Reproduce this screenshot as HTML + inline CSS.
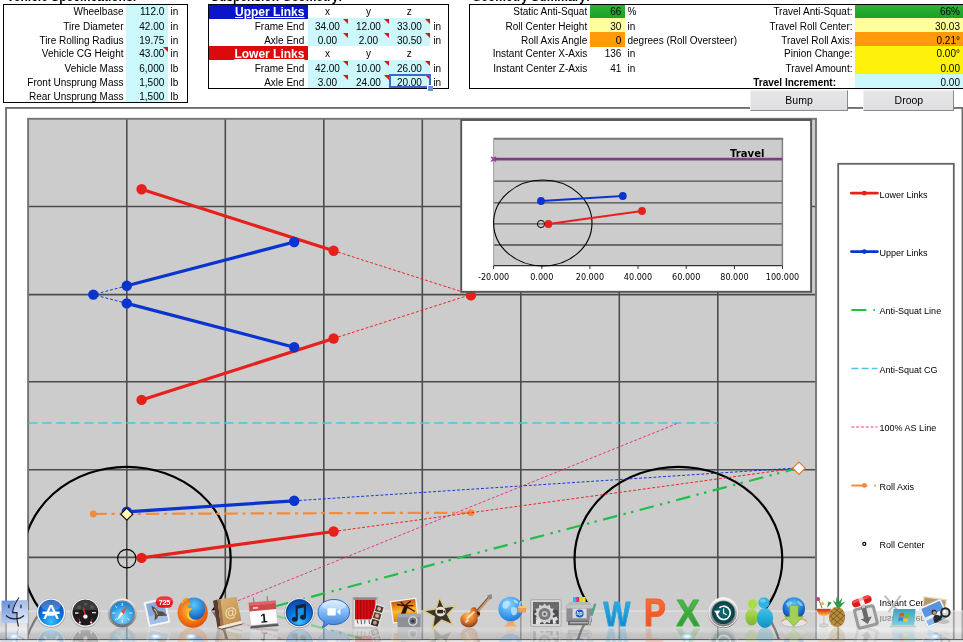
<!DOCTYPE html>
<html><head><meta charset="utf-8"><title>Suspension Calculator</title>
<style>
html,body{margin:0;padding:0;background:#fff;}
body{width:963px;height:642px;overflow:hidden;position:relative;font-family:"Liberation Sans",Arial,sans-serif;font-size:10px;color:#000;}
.t{position:absolute;white-space:nowrap;line-height:12px;height:12px;}
.r{text-align:right;}
.c{text-align:center;}
.b{font-weight:bold;}
.box{position:absolute;box-sizing:border-box;}
.tri{position:absolute;width:0;height:0;border-top:5px solid #d8141c;border-left:5px solid transparent;}
svg{position:absolute;left:0;top:0;}
svg text{font-family:"Liberation Sans",Arial,sans-serif;}
.dv text{font-family:"DejaVu Sans","Liberation Sans",sans-serif;}
</style></head><body>
<svg width="963" height="642" viewBox="0 0 963 642">
<defs><clipPath id="plot"><rect x="28.3" y="118.7" width="788" height="530"/></clipPath><clipPath id="shelfclip"><rect x="0" y="611" width="963" height="29"/></clipPath></defs>
<g id="cg">
<rect x="6.05" y="107.95" width="956.4" height="560" fill="#fff" stroke="#6a6a6a" stroke-width="1.8"/>
<rect x="28.3" y="118.7" width="788" height="530" fill="#cccccc"/>
<line x1="126.8" y1="118" x2="126.8" y2="642" stroke="#4c4c4c" stroke-width="1.6"/>
<line x1="225.3" y1="118" x2="225.3" y2="642" stroke="#4c4c4c" stroke-width="1.6"/>
<line x1="323.8" y1="118" x2="323.8" y2="642" stroke="#4c4c4c" stroke-width="1.6"/>
<line x1="422.3" y1="118" x2="422.3" y2="642" stroke="#4c4c4c" stroke-width="1.6"/>
<line x1="520.8" y1="118" x2="520.8" y2="642" stroke="#4c4c4c" stroke-width="1.6"/>
<line x1="619.3" y1="118" x2="619.3" y2="642" stroke="#4c4c4c" stroke-width="1.6"/>
<line x1="717.8" y1="118" x2="717.8" y2="642" stroke="#4c4c4c" stroke-width="1.6"/>
<line x1="27.6" y1="206.5" x2="817" y2="206.5" stroke="#4c4c4c" stroke-width="1.6"/>
<line x1="27.6" y1="294.6" x2="817" y2="294.6" stroke="#4c4c4c" stroke-width="1.6"/>
<line x1="27.6" y1="381.7" x2="817" y2="381.7" stroke="#4c4c4c" stroke-width="1.6"/>
<line x1="27.6" y1="469.7" x2="817" y2="469.7" stroke="#4c4c4c" stroke-width="1.6"/>
<line x1="27.6" y1="557.4" x2="817" y2="557.4" stroke="#4c4c4c" stroke-width="1.6"/>
<line x1="27.6" y1="645.2" x2="817" y2="645.2" stroke="#4c4c4c" stroke-width="1.6"/>
<rect x="28.1" y="118.8" width="787.9" height="540" fill="none" stroke="#747474" stroke-width="1.9"/>
<g clip-path="url(#plot)">
<line x1="333.6" y1="250.7" x2="470.9" y2="294.6" stroke="#e8201c" stroke-width="0.95" stroke-dasharray="2.9,1.9"/>
<line x1="126.8" y1="285.8" x2="93.3" y2="294.6" stroke="#0a34d0" stroke-width="0.95" stroke-dasharray="2.9,1.9"/>
<line x1="333.6" y1="338.5" x2="470.9" y2="294.6" stroke="#e8201c" stroke-width="0.95" stroke-dasharray="2.9,1.9"/>
<line x1="126.8" y1="303.4" x2="93.3" y2="294.6" stroke="#0a34d0" stroke-width="0.95" stroke-dasharray="2.9,1.9"/>
<line x1="141.6" y1="189.3" x2="333.6" y2="250.7" stroke="#e8201c" stroke-width="3.2" stroke-linecap="round"/>
<line x1="141.6" y1="399.9" x2="333.6" y2="338.5" stroke="#e8201c" stroke-width="3.2" stroke-linecap="round"/>
<line x1="126.8" y1="285.8" x2="294.2" y2="242.0" stroke="#0a34d0" stroke-width="3.2" stroke-linecap="round"/>
<line x1="126.8" y1="303.4" x2="294.2" y2="347.2" stroke="#0a34d0" stroke-width="3.2" stroke-linecap="round"/>
<circle cx="141.6" cy="189.3" r="5.2" fill="#e8201c"/>
<circle cx="333.6" cy="250.7" r="5.2" fill="#e8201c"/>
<circle cx="126.8" cy="285.8" r="5.2" fill="#0a34d0"/>
<circle cx="294.2" cy="242.0" r="5.2" fill="#0a34d0"/>
<circle cx="141.6" cy="399.9" r="5.2" fill="#e8201c"/>
<circle cx="333.6" cy="338.5" r="5.2" fill="#e8201c"/>
<circle cx="126.8" cy="303.4" r="5.2" fill="#0a34d0"/>
<circle cx="294.2" cy="347.2" r="5.2" fill="#0a34d0"/>
<circle cx="93.3" cy="294.6" r="5.2" fill="#0a34d0"/>
<circle cx="470.9" cy="295.4" r="5.2" fill="#e8201c"/>
<line x1="28.3" y1="423" x2="717.8" y2="423" stroke="#4cc4ea" stroke-width="1.6" stroke-dasharray="9.3,4.7"/>
<ellipse cx="126.8" cy="558.9" rx="103.9" ry="92.1" fill="none" stroke="#000" stroke-width="2.2"/>
<ellipse cx="678.4" cy="558.9" rx="103.9" ry="92.1" fill="none" stroke="#000" stroke-width="2.2"/>
<circle cx="126.8" cy="558.6" r="9.2" fill="none" stroke="#000" stroke-width="1.2"/>
<line x1="126.8" y1="645.6" x2="678.4" y2="423" stroke="#ee2a8a" stroke-width="0.95" stroke-dasharray="2.9,1.9"/>
<line x1="126.8" y1="645.6" x2="799.0" y2="467.8" stroke="#20be48" stroke-width="2.2" stroke-dasharray="14.5,6.5,2.4,5.4,2.4,6.56" stroke-dashoffset="-1.86"/>
<line x1="93.3" y1="514.0" x2="470.9" y2="512.7" stroke="#f58a3a" stroke-width="2.2" stroke-dasharray="13.6,4.6,3.2,4.8"/>
<circle cx="93.3" cy="514.0" r="3.4" fill="#f58a3a"/>
<circle cx="470.9" cy="512.7" r="3.4" fill="#f58a3a"/>
<line x1="294.2" y1="500.8" x2="799.0" y2="467.8" stroke="#0a34d0" stroke-width="0.95" stroke-dasharray="2.9,1.9"/>
<line x1="333.6" y1="531.5" x2="799.0" y2="467.8" stroke="#e8201c" stroke-width="0.95" stroke-dasharray="2.9,1.9"/>
<line x1="126.8" y1="511.8" x2="294.2" y2="500.8" stroke="#0a34d0" stroke-width="3.2" stroke-linecap="round"/>
<line x1="141.6" y1="557.9" x2="333.6" y2="531.5" stroke="#e8201c" stroke-width="3.2" stroke-linecap="round"/>
<circle cx="126.8" cy="511.8" r="5.2" fill="#0a34d0"/>
<circle cx="294.2" cy="500.8" r="5.2" fill="#0a34d0"/>
<circle cx="141.6" cy="557.9" r="5.2" fill="#e8201c"/>
<circle cx="333.6" cy="531.5" r="5.2" fill="#e8201c"/>
<path d="M120.8 514.2 L126.8 508.2 L132.8 514.2 L126.8 520.2 Z" fill="#ffffb4" stroke="#111" stroke-width="1.2"/>
<path d="M792.8 468.2 L799.0 462.0 L805.2 468.2 L799.0 474.4 Z" fill="#ffffff" stroke="#e07a30" stroke-width="1.2"/>
</g>
<g class="dv">
<rect x="461.2" y="120" width="349.9" height="171.8" fill="#fff" stroke="#555" stroke-width="1.9"/>
<rect x="493.6" y="138.7" width="288.8" height="126.6" fill="#cccccc"/>
<line x1="493.6" y1="138.7" x2="783.2" y2="138.7" stroke="#747474" stroke-width="1.9"/>
<line x1="493.6" y1="181.2" x2="782.4" y2="181.2" stroke="#4c4c4c" stroke-width="1.3"/>
<line x1="493.6" y1="202.8" x2="782.4" y2="202.8" stroke="#4c4c4c" stroke-width="1.3"/>
<line x1="493.6" y1="223.9" x2="782.4" y2="223.9" stroke="#4c4c4c" stroke-width="1.3"/>
<line x1="493.6" y1="245" x2="782.4" y2="245" stroke="#4c4c4c" stroke-width="1.3"/>
<line x1="493.6" y1="265.6" x2="782.4" y2="265.6" stroke="#333" stroke-width="1.1"/>
<line x1="493.6" y1="138.7" x2="493.6" y2="266" stroke="#a0a0a0" stroke-width="1"/>
<line x1="782.4" y1="138.7" x2="782.4" y2="266" stroke="#808080" stroke-width="1.5"/>
<line x1="493.6" y1="265.6" x2="493.6" y2="269" stroke="#333" stroke-width="1"/>
<text x="493.6" y="280" font-size="8.1" text-anchor="middle" fill="#000">-20.000</text>
<line x1="541.8" y1="265.6" x2="541.8" y2="269" stroke="#333" stroke-width="1"/>
<text x="541.8" y="280" font-size="8.1" text-anchor="middle" fill="#000">0.000</text>
<line x1="589.9" y1="265.6" x2="589.9" y2="269" stroke="#333" stroke-width="1"/>
<text x="589.9" y="280" font-size="8.1" text-anchor="middle" fill="#000">20.000</text>
<line x1="638.0" y1="265.6" x2="638.0" y2="269" stroke="#333" stroke-width="1"/>
<text x="638.0" y="280" font-size="8.1" text-anchor="middle" fill="#000">40.000</text>
<line x1="686.2" y1="265.6" x2="686.2" y2="269" stroke="#333" stroke-width="1"/>
<text x="686.2" y="280" font-size="8.1" text-anchor="middle" fill="#000">60.000</text>
<line x1="734.4" y1="265.6" x2="734.4" y2="269" stroke="#333" stroke-width="1"/>
<text x="734.4" y="280" font-size="8.1" text-anchor="middle" fill="#000">80.000</text>
<line x1="782.5" y1="265.6" x2="782.5" y2="269" stroke="#333" stroke-width="1"/>
<text x="782.5" y="280" font-size="8.1" text-anchor="middle" fill="#000">100.000</text>
<line x1="493.6" y1="159.2" x2="782.4" y2="159.2" stroke="#803c7e" stroke-width="2.7"/>
<path d="M491.3 156.9 L495.9 161.5 M495.9 156.9 L491.3 161.5" stroke="#a23a98" stroke-width="1.5"/>
<text x="764.5" y="156.8" font-size="10.1" font-weight="bold" text-anchor="end" fill="#000">Travel</text>
<ellipse cx="542.8" cy="223" rx="49.2" ry="43" fill="none" stroke="#000" stroke-width="1.1"/>
<line x1="541" y1="201" x2="622.8" y2="196" stroke="#0a34d0" stroke-width="1.8"/>
<line x1="548.4" y1="224" x2="642" y2="211" stroke="#e8201c" stroke-width="1.8"/>
<circle cx="541" cy="224" r="3.6" fill="none" stroke="#000" stroke-width="1"/>
<circle cx="541" cy="201" r="3.9" fill="#0a34d0"/>
<circle cx="622.8" cy="196" r="3.9" fill="#0a34d0"/>
<circle cx="548.4" cy="224" r="3.9" fill="#e8201c"/>
<circle cx="642" cy="211" r="3.9" fill="#e8201c"/>
</g>
<rect x="838.2" y="163.8" width="115.6" height="500" fill="#fff" stroke="#646464" stroke-width="1.8"/>
<text x="879.6" y="197.6" font-size="9" fill="#000">Lower Links</text>
<text x="879.6" y="256.0" font-size="9" fill="#000">Upper Links</text>
<text x="879.6" y="314.4" font-size="9" fill="#000">Anti-Squat Line</text>
<text x="879.6" y="372.8" font-size="9" fill="#000">Anti-Squat CG</text>
<text x="879.6" y="431.2" font-size="9" fill="#000">100% AS Line</text>
<text x="879.6" y="489.6" font-size="9" fill="#000">Roll Axis</text>
<text x="879.6" y="548.0" font-size="9" fill="#000">Roll Center</text>
<text x="879.6" y="606.4" font-size="9" fill="#000">Instant Center</text>
<line x1="851.4" y1="193.2" x2="877.4" y2="193.2" stroke="#e8201c" stroke-width="2.8" stroke-linecap="round"/><circle cx="864.3" cy="193.2" r="2.4" fill="#e8201c"/>
<line x1="851.4" y1="251.6" x2="877.4" y2="251.6" stroke="#0a34d0" stroke-width="2.8" stroke-linecap="round"/><circle cx="864.3" cy="251.6" r="2.4" fill="#0a34d0"/>
<line x1="851.4" y1="310.1" x2="877.4" y2="310.1" stroke="#1cc43c" stroke-width="2" stroke-dasharray="15,7,1.5,20"/>
<line x1="851.4" y1="368.6" x2="877.4" y2="368.6" stroke="#4cc4ea" stroke-width="1.5" stroke-dasharray="7,3.2"/>
<line x1="851.4" y1="427.0" x2="877.4" y2="427.0" stroke="#ee2a8a" stroke-width="0.95" stroke-dasharray="2.9,1.9"/>
<line x1="851.4" y1="485.4" x2="877.4" y2="485.4" stroke="#f58a3a" stroke-width="2" stroke-dasharray="16,7,1.5,20"/><circle cx="864.3" cy="485.4" r="2.4" fill="#f58a3a"/>
<circle cx="864.3" cy="543.9" r="1.5" fill="#fff" stroke="#000" stroke-width="1.2"/>
</g>
<defs>
<linearGradient id="shelfbase" x1="0" y1="0" x2="0" y2="1"><stop offset="0" stop-color="#d2d2d2"/><stop offset="0.54" stop-color="#d4d4d4"/><stop offset="0.59" stop-color="#dfdfdf"/><stop offset="0.7" stop-color="#dadada"/><stop offset="0.78" stop-color="#c4c4c4"/><stop offset="1" stop-color="#b2b2b2"/></linearGradient>
<linearGradient id="shelf" x1="0" y1="0" x2="0" y2="1"><stop offset="0" stop-color="#fff" stop-opacity="0.42"/><stop offset="0.55" stop-color="#fff" stop-opacity="0.36"/><stop offset="0.62" stop-color="#fff" stop-opacity="0.55"/><stop offset="0.86" stop-color="#f4f4f4" stop-opacity="0.6"/><stop offset="0.87" stop-color="#aaa" stop-opacity="0.75"/><stop offset="1" stop-color="#8a8a8a" stop-opacity="0.85"/></linearGradient>
<radialGradient id="glow"><stop offset="0" stop-color="#fff"/><stop offset="0.3" stop-color="#eaf6ff"/><stop offset="0.6" stop-color="#b4dcff" stop-opacity="0.8"/><stop offset="1" stop-color="#9ad0ff" stop-opacity="0"/></radialGradient>
<radialGradient id="bluebtn" cx="0.5" cy="0.85" r="0.9"><stop offset="0" stop-color="#38c0ff"/><stop offset="0.45" stop-color="#0a78e0"/><stop offset="1" stop-color="#0a3ca0"/></radialGradient>
<radialGradient id="safari" cx="0.5" cy="0.7" r="0.8"><stop offset="0" stop-color="#8fdcff"/><stop offset="0.6" stop-color="#2a9be0"/><stop offset="1" stop-color="#1a6cc0"/></radialGradient>
<linearGradient id="silver" x1="0" y1="0" x2="0" y2="1"><stop offset="0" stop-color="#f4f4f4"/><stop offset="0.5" stop-color="#b8b8b8"/><stop offset="1" stop-color="#707070"/></linearGradient>
<radialGradient id="ff" cx="0.45" cy="0.4" r="0.7"><stop offset="0" stop-color="#ffd23a"/><stop offset="0.5" stop-color="#f47c14"/><stop offset="1" stop-color="#d8400a"/></radialGradient>
<radialGradient id="ffg" cx="0.5" cy="0.3" r="0.8"><stop offset="0" stop-color="#5ac8f8"/><stop offset="0.6" stop-color="#1a6cc8"/><stop offset="1" stop-color="#0a2c80"/></radialGradient>
<linearGradient id="book" x1="0" y1="0" x2="1" y2="1"><stop offset="0" stop-color="#e0b878"/><stop offset="1" stop-color="#b88848"/></linearGradient>
<linearGradient id="chat" x1="0" y1="0" x2="0" y2="1"><stop offset="0" stop-color="#cfe8ff"/><stop offset="0.5" stop-color="#7ab4f4"/><stop offset="1" stop-color="#3a7cd8"/></linearGradient>
<linearGradient id="sunset" x1="0" y1="0" x2="0" y2="1"><stop offset="0" stop-color="#c85a10"/><stop offset="0.5" stop-color="#ffb830"/><stop offset="1" stop-color="#e07818"/></linearGradient>
<radialGradient id="gtr" cx="0.4" cy="0.4" r="0.7"><stop offset="0" stop-color="#ffc060"/><stop offset="0.5" stop-color="#e07828"/><stop offset="1" stop-color="#6a2810"/></radialGradient>
<radialGradient id="globe" cx="0.4" cy="0.3" r="0.8"><stop offset="0" stop-color="#8fd4ff"/><stop offset="0.6" stop-color="#3a9cf0"/><stop offset="1" stop-color="#1a6cd0"/></radialGradient>
<linearGradient id="wblue" x1="0" y1="0" x2="0" y2="1"><stop offset="0" stop-color="#35b4ea"/><stop offset="1" stop-color="#0f7ec0"/></linearGradient>
<linearGradient id="pred" x1="0" y1="0" x2="0" y2="1"><stop offset="0" stop-color="#f8743c"/><stop offset="1" stop-color="#e8481c"/></linearGradient>
<linearGradient id="xgreen" x1="0" y1="0" x2="0" y2="1"><stop offset="0" stop-color="#58c050"/><stop offset="1" stop-color="#2a9030"/></linearGradient>
<radialGradient id="tm" cx="0.5" cy="0.5" r="0.6"><stop offset="0" stop-color="#1a7078"/><stop offset="1" stop-color="#06343c"/></radialGradient>
<linearGradient id="msnb" x1="0" y1="0" x2="0" y2="1"><stop offset="0" stop-color="#3cc4ec"/><stop offset="1" stop-color="#1490c0"/></linearGradient>
<linearGradient id="msng" x1="0" y1="0" x2="0" y2="1"><stop offset="0" stop-color="#b4e050"/><stop offset="1" stop-color="#7cb430"/></linearGradient>
<linearGradient id="drink" x1="0" y1="0" x2="0" y2="1"><stop offset="0" stop-color="#d01818"/><stop offset="1" stop-color="#ffd040"/></linearGradient>
<linearGradient id="win" x1="0" y1="0" x2="0" y2="1"><stop offset="0" stop-color="#3aa4c8"/><stop offset="1" stop-color="#7fd0d8"/></linearGradient>
<linearGradient id="finder" x1="0" y1="0" x2="0" y2="1"><stop offset="0" stop-color="#6a92dc"/><stop offset="1" stop-color="#b4c8ee"/></linearGradient>
<linearGradient id="finder2" x1="0" y1="0" x2="0" y2="1"><stop offset="0" stop-color="#a8bce8"/><stop offset="1" stop-color="#e4ecfc"/></linearGradient>
</defs>
<rect x="0" y="611" width="963" height="29" fill="url(#shelfbase)"/>
<g clip-path="url(#shelfclip)"><g style="mix-blend-mode:darken" opacity="0.42"><use href="#cg" transform="translate(0,1222) scale(1,-1)"/></g></g>
<rect x="0" y="610.5" width="963" height="1" fill="#ececec" opacity="0.8"/>
<rect x="0" y="640" width="963" height="2" fill="#e6e6e6"/>
<rect x="0" y="639" width="963" height="1.1" fill="#606060"/>
<g opacity="0.2" transform="translate(0,1255.0) scale(1,-1)"><g>
<rect x="1.5" y="600.6" width="26.5" height="22.6" fill="url(#finder)"/>
<path d="M15.5 600.6 L28 600.6 L28 623.2 L17.5 623.2 C16.5 618 16.5 614 17 612.5 L12.8 612.5 C13 607 14.2 603 15.5 600.6 Z" fill="url(#finder2)"/>
<path d="M19 597.5 C15 603 13 608 12.6 612.6 L17 612.6 C16.4 617 17 622 18.4 626.5" fill="none" stroke="#1a1a2a" stroke-width="1.1"/>
<path d="M6 615.5 C11 620 19 620 24 615.5" fill="none" stroke="#1a1a2a" stroke-width="1.1"/>
<rect x="8.3" y="604.6" width="1.2" height="3.6" fill="#1a1a2a"/><rect x="20.4" y="604.6" width="1.2" height="3.6" fill="#1a1a2a"/>
</g></g>
<g opacity="0.2" transform="translate(0,1255.0) scale(1,-1)"><g>
<circle cx="51" cy="613" r="14.8" fill="#555" opacity="0.35"/><circle cx="51" cy="612.6" r="14.2" fill="#f4f6fa"/><circle cx="51" cy="612.6" r="12.8" fill="url(#bluebtn)"/>
<ellipse cx="51" cy="605.5" rx="10" ry="5.5" fill="#fff" opacity="0.22"/>
<text transform="translate(51,619) scale(1.12,1)" font-size="21" fill="#fff" text-anchor="middle" font-family="Liberation Sans, Arial, sans-serif">A</text>
<rect x="42.4" y="611.6" width="17.2" height="2.4" fill="#fff"/><rect x="47.6" y="615.2" width="6.8" height="0.9" fill="#fff" opacity="0.8"/>
</g></g>
<g opacity="0.2" transform="translate(0,1255.0) scale(1,-1)"><g>
<circle cx="85.4" cy="613" r="14.8" fill="#555" opacity="0.35"/><circle cx="85.4" cy="612.6" r="14.2" fill="#f0f0f0"/><circle cx="85.4" cy="612.6" r="12.9" fill="#1c1c1e"/>
<path d="M72.8 610 A12.9 12.9 0 0 1 98 610 Z" fill="#3a3a3e"/>
<circle cx="79" cy="607.3" r="2" fill="#555"/><circle cx="92" cy="607" r="2" fill="#555"/><circle cx="85.6" cy="604" r="1.6" fill="#555"/>
<path d="M75 613 h3.5 M92 612.6 h4" stroke="#ddd" stroke-width="1.3"/>
<path d="M83.3 607.5 L85.4 616" stroke="#e82020" stroke-width="1.5"/>
<path d="M78.8 618.5 l1.3 3.5 M92.2 618.5 l-1.3 3.5" stroke="#e82020" stroke-width="1"/>
<circle cx="85.4" cy="616.6" r="2.2" fill="#f4f4f4"/><circle cx="79.8" cy="622.6" r="1.1" fill="#eee"/><circle cx="91.2" cy="622.6" r="1.1" fill="#eee"/>
</g></g>
<g opacity="0.2" transform="translate(0,1255.0) scale(1,-1)"><g>
<circle cx="122.2" cy="613" r="14.6" fill="url(#silver)"/><circle cx="122.2" cy="613" r="11.8" fill="url(#safari)"/>
<circle cx="122.2" cy="613" r="12.3" fill="none" stroke="#5a6670" stroke-width="0.7"/>
<path d="M122.2 603 v3 M122.2 620 v3 M112.2 613 h3 M129.2 613 h3 M115.2 606 l1.8 1.8 M129.2 620 l-1.8 -1.8 M115.2 620 l1.8 -1.8" stroke="#fff" stroke-width="1" opacity="0.85"/>
<path d="M127.6 605.6 L123.4 614.2 L121 611.8 Z" fill="#e8502a"/><path d="M116.8 620.4 L121 611.8 L123.4 614.2 Z" fill="#f8f8f8"/>
</g></g>
<g opacity="0.2" transform="translate(0,1255.0) scale(1,-1)"><g>
<g transform="translate(0.4,-1.2) rotate(-12 156.5 613.5)">
<rect x="145.2" y="600.6" width="22.8" height="26" fill="#f4f4f6" stroke="#c8c8cc" stroke-width="0.8" stroke-dasharray="1.4,0.9"/>
<rect x="147.6" y="603" width="18" height="21.2" fill="#86aadf"/>
<rect x="147.6" y="616" width="18" height="8.2" fill="#a4c0ea"/>
<path d="M152.5 606 C156 608 157 611 158 613 C161 613 164 615 166 619 C162 618 159 618 157 617.4 C156 619 154.5 620.4 152.4 621 C153.4 618.6 153.8 616.6 154.2 614.6 C152.8 611.6 152.4 609 152.5 606 Z" fill="#5c4a32"/>
<path d="M154.6 609.5 C156 611.4 156.6 613.4 156.4 616" stroke="#d8ccb0" stroke-width="1" fill="none"/>
</g>
<rect x="155.8" y="596.6" width="17.2" height="11.2" rx="5.6" fill="#e8161c"/>
<rect x="156.4" y="597.2" width="16" height="5" rx="4" fill="#ff6a6a" opacity="0.45"/>
<text x="164.4" y="605.1" font-size="7.2" font-weight="bold" fill="#fff" text-anchor="middle" font-family="Liberation Sans, Arial, sans-serif" letter-spacing="-0.3">725</text>
</g></g>
<g opacity="0.2" transform="translate(0,1255.0) scale(1,-1)"><g>
<circle cx="194" cy="610.4" r="13" fill="url(#ffg)"/>
<path d="M189.6 599.6 C189 602 189.6 603.6 191 604.6 C188.6 605 187.6 606.4 187.8 608 C189.6 607.6 191.4 608 192.4 609 C190 610 188.6 612 189 614.6 C189.6 618.6 193.6 620.6 197.6 619.6 C202 618.4 204.6 615 205 610.6 C205.4 607.4 204.6 604.6 203.4 602.6 C206 604.6 208 608.4 207.8 613.4 C207.4 621.6 200.6 628 192.4 627.8 C184 627.6 177.6 621 177.6 612.6 C177.6 608 179.4 604 182.4 601.4 C182.2 603 182.4 604.4 183 605.4 C184 602.6 186.4 600.4 189.6 599.6 Z" fill="url(#ff)"/>
<path d="M182.4 601.4 C183.4 599 185.6 597.6 188.4 597.8 C187.4 598.8 187.2 599.8 187.4 600.6 C185.4 601.4 184 602.6 183 604.4 Z" fill="#f7941c"/>
<path d="M189 614.6 C189.6 618.6 193.6 620.6 197.6 619.6 C195 621.6 190.4 621.6 188 618.6 C186.6 616.8 186.6 614.6 187.6 612.6 Z" fill="#ffd84a" opacity="0.8"/>
</g></g>
<g opacity="0.2" transform="translate(0,1255.0) scale(1,-1)"><g>
<path d="M213 600.8 L217.6 599.4 L220.8 626 L217.4 627.2 Z" fill="#5a3c30"/>
<path d="M217.6 599.4 L236.4 596.8 L241.4 620.8 L220.8 626 Z" fill="url(#book)"/>
<path d="M217.6 599.4 L220.4 599 L223.6 625.2 L220.800 626 Z" fill="#8a6240" opacity="0.7"/>
<path d="M220.8 626 L241.4 620.8 L242.4 623.6 L221.6 628.8 L217.4 627.2 Z" fill="#efe8d8"/>
<path d="M221.6 628.8 L242.4 623.6 L242.6 624.6 L221.6 629.800 L217.2 628 L217.4 627.2 Z" fill="#6a4a38"/>
<text x="230.8" y="616.6" font-size="13" font-weight="bold" fill="#f2dcb4" text-anchor="middle" font-family="Liberation Sans, Arial, sans-serif" transform="rotate(-10 230.8 612)">@</text>
</g></g>
<g opacity="0.2" transform="translate(0,1255.0) scale(1,-1)"><g transform="rotate(-5 263 613)">
<path d="M250 624 L276.6 624 L277.6 627.4 L249 627.4 Z" fill="#5a5a5c"/>
<rect x="249.6" y="601.6" width="27" height="23" fill="#fdfdfd" stroke="#bbb" stroke-width="0.5"/>
<path d="M249.6 601.6 h27 v8.6 h-27 Z" fill="#d04a4c"/>
<rect x="249.6" y="601.6" width="27" height="3" fill="#e47072" opacity="0.7"/>
<rect x="253.4" y="606.4" width="5" height="1.8" fill="#f8d0d0"/>
<path d="M254.8 596.6 v6 M268.6 596.6 v6" stroke="#8a8a8a" stroke-width="1.3"/>
<text x="263.4" y="622.6" font-size="12.6" font-weight="bold" fill="#111" text-anchor="middle" font-family="Liberation Sans, Arial, sans-serif">1</text>
</g></g>
<g opacity="0.2" transform="translate(0,1255.0) scale(1,-1)"><g>
<circle cx="299.4" cy="613" r="15.2" fill="#555" opacity="0.35"/><circle cx="299.4" cy="612.6" r="14.6" fill="#eef2f8"/><circle cx="299.4" cy="612.6" r="13.2" fill="url(#bluebtn)"/>
<circle cx="299.4" cy="612.6" r="13.2" fill="none" stroke="#0a2a6a" stroke-width="0.8"/>
<path d="M295.6 605.6 L306 603.6 L306 617.4 A3 2.4 0 1 1 303.8 615 L303.8 607.6 L297.8 608.8 L297.8 619.4 A3 2.4 0 1 1 295.6 617 Z" fill="#15233c"/>
<path d="M297.8 608.8 L303.8 607.6 L303.8 613 L297.8 614.6 Z" fill="#2aa0e8" opacity="0.6"/>
</g></g>
<g opacity="0.2" transform="translate(0,1255.0) scale(1,-1)"><g>
<path d="M333.8 599.4 C342.6 599.4 349.6 605 349.6 612 C349.6 619 342.6 624.6 333.8 624.6 C331.8 624.6 330 624.4 328.2 623.8 C326.6 625.8 324.4 627 322 627.2 C323.6 625.8 324.4 624 324.2 622 C320.4 619.8 318 616.2 318 612 C318 605 325 599.4 333.8 599.4 Z" fill="url(#chat)" stroke="#2a5cb8" stroke-width="0.9"/>
<ellipse cx="333.8" cy="605.6" rx="12" ry="4.6" fill="#fff" opacity="0.35"/>
<rect x="327.4" y="608.2" width="8.4" height="7.4" rx="1" fill="#fff"/><path d="M336.6 611.8 L340.4 608.8 L340.4 615 Z" fill="#fff"/>
</g></g>
<g opacity="0.2" transform="translate(0,1255.0) scale(1,-1)"><g>
<rect x="353" y="597.4" width="24.2" height="30.6" fill="#d8d8d8" stroke="#9a9a9a" stroke-width="0.6"/>
<rect x="353.6" y="597.6" width="23" height="2.4" fill="#8a8a8a"/>
<rect x="355" y="600" width="20.4" height="19.6" fill="#d40c14"/>
<path d="M357.6 600 v19 M360.6 600 v19 M363.8 600 v19 M367 600 v19 M370.2 600 v19 M373 600 v19" stroke="#8c0408" stroke-width="0.9" opacity="0.8"/>
<rect x="355" y="619.6" width="20.4" height="6.6" fill="#eee"/>
<path d="M357 619.6 l1 4 M361 619.6 l0.6 4.6 M365 619.6 l-0.4 4 M369 619.6 l0.6 4.4" stroke="#555" stroke-width="1"/>
<g transform="rotate(17 377 616)"><rect x="372.6" y="604.6" width="9" height="22.4" fill="#f4f4f4"/>
<rect x="373.4" y="605.6" width="7.4" height="6.2" fill="#4a3a34"/><rect x="373.4" y="612.8" width="7.4" height="6.2" fill="#5a4238"/><rect x="373.4" y="620" width="7.4" height="6.2" fill="#3a2c28"/>
<circle cx="377" cy="608.6" r="2" fill="#d8a890"/><circle cx="377" cy="615.8" r="2" fill="#d8a890"/><circle cx="377" cy="623" r="2" fill="#c89880"/></g>
</g></g>
<g opacity="0.2" transform="translate(0,1255.0) scale(1,-1)"><g>
<g transform="rotate(-8 404 610.6)"><rect x="390.8" y="599" width="27.4" height="23.4" fill="#f8f8f8" stroke="#bbb" stroke-width="0.4"/>
<rect x="392.4" y="600.6" width="24.2" height="20.2" fill="url(#sunset)"/>
<path d="M397 620.6 L405.6 606 L408 606.8 L401 620.6 Z M405.6 606 L398 603.6 M405.6 606 L412 602 M405.6 606 L414 607 M405.6 606 L402 601.6 M407 607 L414.6 613" fill="#2a1608" stroke="#2a1608" stroke-width="1.3"/></g>
<rect x="397.6" y="613.8" width="23" height="13.4" rx="1" fill="#8c9098"/>
<rect x="397.6" y="613.8" width="23" height="3.4" fill="#a4a8b0"/>
<circle cx="412.8" cy="621" r="4.8" fill="#d8d8dc"/><circle cx="412.8" cy="621" r="3.4" fill="#6a6e78"/><circle cx="412.8" cy="621" r="1.6" fill="#30323a"/>
</g></g>
<g opacity="0.2" transform="translate(0,1255.0) scale(1,-1)"><g><polygon points="439.4 597.4 444.1 607.6 455.8 605.8 447.4 614.4 452.6 624.6 441.6 620.0 432.4 628.4 434.3 616.6 423.6 610.8 436.1 608.8" fill="#38362f" stroke="#dcc684" stroke-width="1.4" stroke-linejoin="miter"/><ellipse cx="440.6" cy="611.6" rx="5.2" ry="4.8" fill="#ece6c8"/><rect x="437.2" y="609.8" width="5.8" height="3.6" fill="#2a2a28"/><path d="M443 611.6 l2.200 -1.600 v3.200 Z" fill="#2a2a28"/></g></g>
<g opacity="0.2" transform="translate(0,1255.0) scale(1,-1)"><g>
<path d="M473.4 613.6 L488.4 596.4 L490.6 598.2 L476 615.6 Z" fill="#c89a6a"/>
<path d="M473.4 613.6 L488.4 596.4 L489 597 L474.2 614.2 Z" fill="#6a4a38"/>
<path d="M487 595.4 L491.6 594 L492.2 598.6 L489.4 599.8 Z" fill="#8a8a88"/>
<path d="M472.6 607.6 C475 606.4 477.4 608.4 476.6 611 C478.4 610.6 480.6 612 480 614.4 C479.4 616.4 478 616.6 477.4 617.6 C478.6 622 475.6 626.4 470.6 627.2 C465 628 460.6 624.6 460.4 620 C460.2 615.4 464 612.2 468.6 612.4 C469.6 612.4 470.4 611.6 470.4 610.4 C470.4 609 471.4 608 472.6 607.6 Z" fill="url(#gtr)"/>
<path d="M466.6 619 L474.4 611.6" stroke="#f8e8c0" stroke-width="1.6"/><rect x="465" y="620" width="4" height="2" fill="#ddd" transform="rotate(-45 467 621)"/>
<path d="M477.4 611.4 C479.4 611.6 480.6 613.4 479.4 615.4 L476.8 614 Z" fill="#3a1a10"/>
</g></g>
<g opacity="0.2" transform="translate(0,1255.0) scale(1,-1)"><g>
<path d="M507.4 621 h6.4 l1 4.6 h-8.4 Z" fill="#f0a868"/><rect x="504.6" y="625" width="12" height="1.8" rx="0.9" fill="#f0b070"/>
<circle cx="510.6" cy="609" r="12.2" fill="url(#globe)"/>
<path d="M503 603 C505 600.6 508 600 509.6 601.6 C511 603.4 509 605.4 507.6 607.4 C506.4 609.4 504 609 502.4 607 Z M511.6 607.4 C514.6 606.4 517.6 608 517.4 611 C517.2 614 514.4 616.6 512.6 615 C511 613.6 510.4 609.6 511.6 607.4 Z M513 599.6 C515.6 599.6 518 601.6 518.6 603.6 C516.6 604 514 603 513 599.6 Z" fill="#c8ecff" opacity="0.75"/>
<rect x="518.2" y="606" width="8" height="6.6" rx="0.8" fill="#e8a05a"/><path d="M519.8 606 v-2 a2.4 2.4 0 0 1 4.8 0 v2" fill="none" stroke="#d8d0c0" stroke-width="1.2"/>
<rect x="518.2" y="606" width="8" height="2" fill="#f4c080"/>
</g></g>
<g opacity="0.2" transform="translate(0,1255.0) scale(1,-1)"><g><rect x="530.6" y="599.6" width="30.6" height="27" rx="1.6" fill="#d4d4d4" stroke="#9c9c9c" stroke-width="0.7"/><rect x="533" y="602" width="25.8" height="22" fill="#4c4c4e"/><path d="M533 602 h25.8 v9 C550 607 541 607 533 611 Z" fill="#6a6a6c"/><polygon points="555.2 614.0 552.5 616.1 553.8 619.3 550.4 619.8 549.9 623.2 546.7 621.9 544.6 624.6 542.5 621.9 539.3 623.2 538.8 619.8 535.4 619.3 536.7 616.1 534.0 614.0 536.7 611.9 535.4 608.7 538.8 608.2 539.3 604.8 542.5 606.1 544.6 603.4 546.7 606.1 549.9 604.8 550.4 608.2 553.8 608.7 552.5 611.9" fill="#d0d0d2"/><circle cx="544.6" cy="614" r="6" fill="#77777a"/><circle cx="544.6" cy="614" r="3" fill="#c4c4c6"/><circle cx="544.6" cy="614" r="1.2" fill="#555"/><path d="M552.6 618 l4 -1.4 l1.4 3 l-2.6 1.4 l1.2 2.6 l-3.6 0.4 Z" fill="#e0e0e0"/><path d="M536 620 l2.6 -2 l2.4 2.6 l-1.2 3.4 l-4 0 Z" fill="#e0e0e0"/></g></g>
<g opacity="0.2" transform="translate(0,1255.0) scale(1,-1)"><g>
<rect x="573" y="597" width="3.2" height="5.4" fill="#20c0e8"/><rect x="576.2" y="597" width="3.2" height="5.4" fill="#e020a0"/><rect x="579.4" y="597" width="3.2" height="5.4" fill="#e8d818"/><rect x="582.6" y="597" width="3" height="5.4" fill="#f4e020"/>
<path d="M569.6 602 h19.6 l2.6 3 h-25 Z" fill="#b8b8ba"/>
<rect x="566.4" y="605" width="25.6" height="17" fill="#8e8e90"/><rect x="566.4" y="605" width="25.6" height="3.4" fill="#c4c4c6"/>
<rect x="572.6" y="608.6" width="14" height="9.6" fill="#d8dce4"/><circle cx="579.6" cy="613.4" r="4" fill="#1c5cb8"/>
<text x="579.6" y="615.4" font-size="5" font-style="italic" font-weight="bold" fill="#fff" text-anchor="middle" font-family="Liberation Sans, Arial, sans-serif">hp</text>
<rect x="568" y="620.6" width="22.6" height="4.6" fill="#6c6c6e"/><rect x="570" y="622" width="18" height="1.4" fill="#b4b4b4"/>
<path d="M596.4 604 L592.6 616 L590.2 615.2 L594 603.4 Z" fill="#5aa088"/><path d="M592 616 L589.2 625.6 L588.4 625.2 L590.6 615.6 Z" fill="#d0d0d0"/>
</g></g>
<g opacity="0.2" transform="translate(0,1255.0) scale(1,-1)"><g font-family="Liberation Sans, Arial, sans-serif" font-weight="bold" text-anchor="middle" stroke-linejoin="round">
<text transform="translate(616.8,625.6) scale(0.8,1)" font-size="35.5" fill="url(#wblue)" stroke="#2aa6e0" stroke-width="1.2">W</text>
</g></g>
<g opacity="0.2" transform="translate(0,1255.0) scale(1,-1)"><g font-family="Liberation Sans, Arial, sans-serif" font-weight="bold" text-anchor="middle" stroke-linejoin="round">
<text transform="translate(655,626.2) scale(0.86,1)" font-size="38" fill="url(#pred)" stroke="#f2602e" stroke-width="1.2">P</text>
</g></g>
<g opacity="0.2" transform="translate(0,1255.0) scale(1,-1)"><g font-family="Liberation Sans, Arial, sans-serif" font-weight="bold" text-anchor="middle" stroke-linejoin="round">
<text transform="translate(688,626) scale(0.94,1)" font-size="37.5" fill="url(#xgreen)" stroke="#42ae42" stroke-width="1.2">X</text>
</g></g>
<g opacity="0.2" transform="translate(0,1255.0) scale(1,-1)"><g>
<circle cx="723.4" cy="612.6" r="15.4" fill="url(#silver)"/><circle cx="723.4" cy="612.6" r="14.4" fill="none" stroke="#fafafa" stroke-width="1"/><circle cx="723.4" cy="612.6" r="12.2" fill="#8a9294"/><circle cx="723.4" cy="612.6" r="11.4" fill="url(#tm)"/>
<path d="M717 612.8 A6.6 6.6 0 1 0 719.4 607.8" fill="none" stroke="#fff" stroke-width="1.7"/>
<path d="M714 610.8 L720.4 610.6 L717.4 615.2 Z" fill="#fff"/>
<path d="M723.6 608.6 V613.2 L726.6 614.8" fill="none" stroke="#fff" stroke-width="1.1"/>
</g></g>
<g opacity="0.2" transform="translate(0,1255.0) scale(1,-1)"><g>
<ellipse cx="751.6" cy="617" rx="6.4" ry="8.6" fill="url(#msng)"/><circle cx="752.6" cy="604" r="4.7" fill="#a8dc48"/>
<ellipse cx="765" cy="618" rx="8.2" ry="10" fill="url(#msnb)"/><circle cx="764" cy="602.8" r="5.6" fill="#2cb4e4"/>
<ellipse cx="763" cy="600.8" rx="3" ry="1.8" fill="#fff" opacity="0.3"/>
</g></g>
<g opacity="0.2" transform="translate(0,1255.0) scale(1,-1)"><g>
<ellipse cx="794" cy="622.4" rx="13" ry="4.6" fill="#e4e4e4" stroke="#a8a8a8" stroke-width="0.6"/>
<path d="M781.4 621.6 A13 4.4 0 0 1 806.6 621.6" fill="none" stroke="#e8a040" stroke-width="1.6" opacity="0.8"/>
<circle cx="793.8" cy="608.4" r="11.2" fill="url(#ffg)"/>
<path d="M786 604 C788 601 791 600.6 792 602.6 C792.6 604.6 790 606 788.6 607.6 Z M797 601 C800 601 802.6 603.6 803 606 C800.6 606.6 798 605 797 601 Z" fill="#9cdcff" opacity="0.7"/>
<path d="M789.6 605.4 h8.6 v11 h5 l-9.4 10 l-9.2 -10 h5 Z" fill="#a4d058" stroke="#6a9c30" stroke-width="0.5"/>
</g></g>
<g opacity="0.2" transform="translate(0,1255.0) scale(1,-1)"><g>
<ellipse cx="837" cy="617" rx="8.2" ry="10.2" fill="#b48c3c"/>
<path d="M831 611 l12 10 M830 616 l11 9 M834 608 l10 8 M843 610 l-12 11 M845 615 l-11 10 M840 607.6 l-10 9" stroke="#6a4a18" stroke-width="0.9" opacity="0.8"/>
<path d="M837 607.4 L832.6 600 L836 602.6 L836.6 596.6 L838.6 602 L842.6 597.6 L840.6 603.4 L845.4 601.6 L840 607.6 Z" fill="#2a9a48"/>
<path d="M816.6 608.6 h14.4 a7.2 7.6 0 0 1 -14.4 0 Z" fill="url(#drink)"/>
<path d="M816.6 608.6 h14.4" stroke="#f0f0f0" stroke-width="0.8"/>
<rect x="823.2" y="616" width="1.4" height="8.6" fill="#c8c8c8"/><ellipse cx="823.8" cy="625.4" rx="4.6" ry="1.5" fill="#d8d8d8" stroke="#999" stroke-width="0.4"/>
<path d="M827 608 l1.4 -6.4 l3.4 1.2 l-2 2 Z" fill="#2a9a48"/><circle cx="818" cy="599" r="2" fill="#d03a7a"/><path d="M819 600 l3 8" stroke="#6a4a2a" stroke-width="0.8"/>
<circle cx="822.6" cy="603.6" r="1.6" fill="#e8c020"/>
</g></g>
<g opacity="0.2" transform="translate(0,1255.0) scale(1,-1)"><g>
<g transform="rotate(-14 865.6 616.6)">
<rect x="854.6" y="606" width="22.4" height="22" rx="3.2" fill="#9a9a9a"/><rect x="857.6" y="609" width="16.4" height="16" rx="1.4" fill="#e4e4e4"/>
<path d="M863.6 606 h4.6 v12 h3.4 l-5.8 6.4 l-5.6 -6.4 h3.4 Z" fill="#6a6a6a"/>
<rect x="864.4" y="602" width="3" height="6" fill="#c4c4c4"/>
</g>
<g transform="rotate(-20 861.6 601.4)"><rect x="851.6" y="597.6" width="20.4" height="7.6" rx="3.8" fill="#e01818"/><rect x="859.4" y="597.4" width="4.6" height="8" fill="#f4f4f4"/><rect x="852.6" y="598.2" width="18" height="2.4" rx="1.2" fill="#ff7a7a" opacity="0.6"/></g>
</g></g>
<g opacity="0.2" transform="translate(0,1255.0) scale(1,-1)"><g>
<path d="M884.6 595.6 L899.6 612.6 M900.6 595.6 L888.6 612" stroke="#b4b4b4" stroke-width="2" opacity="0.85"/>
<path d="M893.6 609 h22 l-1.6 16.4 h-22.4 Z" fill="url(#win)"/>
<path d="M890.4 625.4 h24.6 l1.6 1.8 h-27.4 Z" fill="#c4c8cc"/>
<path d="M899.8 613.4 c1.6 -1 3 -1 4.4 0 l-0.8 3.6 c-1.4 -1 -2.8 -1 -4.4 0 Z" fill="#e8502a"/>
<path d="M905 613.6 c1.4 1 2.8 1 4.4 0 l-0.8 3.600 c-1.6 1 -3 1 -4.400 0 Z" fill="#6cc03c"/>
<path d="M898.8 617.800 c1.600 -1 3 -1 4.400 0 l-0.800 3.600 c-1.400 -1 -2.800 -1 -4.400 0 Z" fill="#2a8ce0"/>
<path d="M904 618 c1.400 1 2.800 1 4.400 0 l-0.800 3.600 c-1.600 1 -3 1 -4.400 0 Z" fill="#f4c020"/>
</g></g>
<g opacity="0.2" transform="translate(0,1255.0) scale(1,-1)"><g>
<g transform="rotate(8 935 603)"><rect x="922.6" y="597.6" width="24" height="14" fill="#e8dcc0"/><rect x="924" y="599" width="21.2" height="11" fill="#b89a68"/></g>
<g transform="rotate(-24 934 613.4)"><rect x="922.4" y="602.6" width="23.6" height="21.6" fill="#fafafa" stroke="#c4c4c4" stroke-width="0.4"/>
<rect x="924" y="604.2" width="20.4" height="18.4" fill="#5a94dc"/><rect x="924" y="613.6" width="20.4" height="4" fill="#e4eefa"/><rect x="924" y="617" width="20.4" height="5.600" fill="#8ab4e8"/>
<path d="M930.6 622.600 c0 -5 1.600 -7 4 -7.400 c2.400 0.400 4 2.400 4 7.400 Z" fill="#2a2a30"/><circle cx="934.6" cy="612.400" r="2.600" fill="#3a2a24"/><circle cx="934.6" cy="613" r="1.700" fill="#c89478"/></g>
<circle cx="945.4" cy="612.400" r="5.200" fill="#222"/><circle cx="945.4" cy="612.400" r="3.200" fill="#d8d8d8"/><circle cx="944.6" cy="611.600" r="1.400" fill="#fff"/>
<path d="M941 616.600 l-3.600 4.400" stroke="#222" stroke-width="2.600" stroke-linecap="round"/>
<ellipse cx="943.6" cy="621.6" rx="6" ry="2.400" fill="#999" opacity="0.5"/>
</g></g>
<ellipse cx="14" cy="636.4" rx="7" ry="3.4" fill="url(#glow)"/>
<ellipse cx="14" cy="641.6" rx="4" ry="1.6" fill="url(#glow)" opacity="0.9"/>
<ellipse cx="155.6" cy="636.4" rx="7" ry="3.4" fill="url(#glow)"/>
<ellipse cx="155.6" cy="641.6" rx="4" ry="1.6" fill="url(#glow)" opacity="0.9"/>
<ellipse cx="191" cy="636.4" rx="7" ry="3.4" fill="url(#glow)"/>
<ellipse cx="191" cy="641.6" rx="4" ry="1.6" fill="url(#glow)" opacity="0.9"/>
<ellipse cx="687" cy="636.4" rx="7" ry="3.4" fill="url(#glow)"/>
<ellipse cx="687" cy="641.6" rx="4" ry="1.6" fill="url(#glow)" opacity="0.9"/>
<ellipse cx="935" cy="636.4" rx="7" ry="3.4" fill="url(#glow)"/>
<ellipse cx="935" cy="641.6" rx="4" ry="1.6" fill="url(#glow)" opacity="0.9"/>
<g>
<rect x="1.5" y="600.6" width="26.5" height="22.6" fill="url(#finder)"/>
<path d="M15.5 600.6 L28 600.6 L28 623.2 L17.5 623.2 C16.5 618 16.5 614 17 612.5 L12.8 612.5 C13 607 14.2 603 15.5 600.6 Z" fill="url(#finder2)"/>
<path d="M19 597.5 C15 603 13 608 12.6 612.6 L17 612.6 C16.4 617 17 622 18.4 626.5" fill="none" stroke="#1a1a2a" stroke-width="1.1"/>
<path d="M6 615.5 C11 620 19 620 24 615.5" fill="none" stroke="#1a1a2a" stroke-width="1.1"/>
<rect x="8.3" y="604.6" width="1.2" height="3.6" fill="#1a1a2a"/><rect x="20.4" y="604.6" width="1.2" height="3.6" fill="#1a1a2a"/>
</g>
<g>
<circle cx="51" cy="613" r="14.8" fill="#555" opacity="0.35"/><circle cx="51" cy="612.6" r="14.2" fill="#f4f6fa"/><circle cx="51" cy="612.6" r="12.8" fill="url(#bluebtn)"/>
<ellipse cx="51" cy="605.5" rx="10" ry="5.5" fill="#fff" opacity="0.22"/>
<text transform="translate(51,619) scale(1.12,1)" font-size="21" fill="#fff" text-anchor="middle" font-family="Liberation Sans, Arial, sans-serif">A</text>
<rect x="42.4" y="611.6" width="17.2" height="2.4" fill="#fff"/><rect x="47.6" y="615.2" width="6.8" height="0.9" fill="#fff" opacity="0.8"/>
</g>
<g>
<circle cx="85.4" cy="613" r="14.8" fill="#555" opacity="0.35"/><circle cx="85.4" cy="612.6" r="14.2" fill="#f0f0f0"/><circle cx="85.4" cy="612.6" r="12.9" fill="#1c1c1e"/>
<path d="M72.8 610 A12.9 12.9 0 0 1 98 610 Z" fill="#3a3a3e"/>
<circle cx="79" cy="607.3" r="2" fill="#555"/><circle cx="92" cy="607" r="2" fill="#555"/><circle cx="85.6" cy="604" r="1.6" fill="#555"/>
<path d="M75 613 h3.5 M92 612.6 h4" stroke="#ddd" stroke-width="1.3"/>
<path d="M83.3 607.5 L85.4 616" stroke="#e82020" stroke-width="1.5"/>
<path d="M78.8 618.5 l1.3 3.5 M92.2 618.5 l-1.3 3.5" stroke="#e82020" stroke-width="1"/>
<circle cx="85.4" cy="616.6" r="2.2" fill="#f4f4f4"/><circle cx="79.8" cy="622.6" r="1.1" fill="#eee"/><circle cx="91.2" cy="622.6" r="1.1" fill="#eee"/>
</g>
<g>
<circle cx="122.2" cy="613" r="14.6" fill="url(#silver)"/><circle cx="122.2" cy="613" r="11.8" fill="url(#safari)"/>
<circle cx="122.2" cy="613" r="12.3" fill="none" stroke="#5a6670" stroke-width="0.7"/>
<path d="M122.2 603 v3 M122.2 620 v3 M112.2 613 h3 M129.2 613 h3 M115.2 606 l1.8 1.8 M129.2 620 l-1.8 -1.8 M115.2 620 l1.8 -1.8" stroke="#fff" stroke-width="1" opacity="0.85"/>
<path d="M127.6 605.6 L123.4 614.2 L121 611.8 Z" fill="#e8502a"/><path d="M116.8 620.4 L121 611.8 L123.4 614.2 Z" fill="#f8f8f8"/>
</g>
<g>
<g transform="translate(0.4,-1.2) rotate(-12 156.5 613.5)">
<rect x="145.2" y="600.6" width="22.8" height="26" fill="#f4f4f6" stroke="#c8c8cc" stroke-width="0.8" stroke-dasharray="1.4,0.9"/>
<rect x="147.6" y="603" width="18" height="21.2" fill="#86aadf"/>
<rect x="147.6" y="616" width="18" height="8.2" fill="#a4c0ea"/>
<path d="M152.5 606 C156 608 157 611 158 613 C161 613 164 615 166 619 C162 618 159 618 157 617.4 C156 619 154.5 620.4 152.4 621 C153.4 618.6 153.8 616.6 154.2 614.6 C152.8 611.6 152.4 609 152.5 606 Z" fill="#5c4a32"/>
<path d="M154.6 609.5 C156 611.4 156.6 613.4 156.4 616" stroke="#d8ccb0" stroke-width="1" fill="none"/>
</g>
<rect x="155.8" y="596.6" width="17.2" height="11.2" rx="5.6" fill="#e8161c"/>
<rect x="156.4" y="597.2" width="16" height="5" rx="4" fill="#ff6a6a" opacity="0.45"/>
<text x="164.4" y="605.1" font-size="7.2" font-weight="bold" fill="#fff" text-anchor="middle" font-family="Liberation Sans, Arial, sans-serif" letter-spacing="-0.3">725</text>
</g>
<g>
<circle cx="194" cy="610.4" r="13" fill="url(#ffg)"/>
<path d="M189.6 599.6 C189 602 189.6 603.6 191 604.6 C188.6 605 187.6 606.4 187.8 608 C189.6 607.6 191.4 608 192.4 609 C190 610 188.6 612 189 614.6 C189.6 618.6 193.6 620.6 197.6 619.6 C202 618.4 204.6 615 205 610.6 C205.4 607.4 204.6 604.6 203.4 602.6 C206 604.6 208 608.4 207.8 613.4 C207.4 621.6 200.6 628 192.4 627.8 C184 627.6 177.6 621 177.6 612.6 C177.6 608 179.4 604 182.4 601.4 C182.2 603 182.4 604.4 183 605.4 C184 602.6 186.4 600.4 189.6 599.6 Z" fill="url(#ff)"/>
<path d="M182.4 601.4 C183.4 599 185.6 597.6 188.4 597.8 C187.4 598.8 187.2 599.8 187.4 600.6 C185.4 601.4 184 602.6 183 604.4 Z" fill="#f7941c"/>
<path d="M189 614.6 C189.6 618.6 193.6 620.6 197.6 619.6 C195 621.6 190.4 621.6 188 618.6 C186.6 616.8 186.6 614.6 187.6 612.6 Z" fill="#ffd84a" opacity="0.8"/>
</g>
<g>
<path d="M213 600.8 L217.6 599.4 L220.8 626 L217.4 627.2 Z" fill="#5a3c30"/>
<path d="M217.6 599.4 L236.4 596.8 L241.4 620.8 L220.8 626 Z" fill="url(#book)"/>
<path d="M217.6 599.4 L220.4 599 L223.6 625.2 L220.800 626 Z" fill="#8a6240" opacity="0.7"/>
<path d="M220.8 626 L241.4 620.8 L242.4 623.6 L221.6 628.8 L217.4 627.2 Z" fill="#efe8d8"/>
<path d="M221.6 628.8 L242.4 623.6 L242.6 624.6 L221.6 629.800 L217.2 628 L217.4 627.2 Z" fill="#6a4a38"/>
<text x="230.8" y="616.6" font-size="13" font-weight="bold" fill="#f2dcb4" text-anchor="middle" font-family="Liberation Sans, Arial, sans-serif" transform="rotate(-10 230.8 612)">@</text>
</g>
<g transform="rotate(-5 263 613)">
<path d="M250 624 L276.6 624 L277.6 627.4 L249 627.4 Z" fill="#5a5a5c"/>
<rect x="249.6" y="601.6" width="27" height="23" fill="#fdfdfd" stroke="#bbb" stroke-width="0.5"/>
<path d="M249.6 601.6 h27 v8.6 h-27 Z" fill="#d04a4c"/>
<rect x="249.6" y="601.6" width="27" height="3" fill="#e47072" opacity="0.7"/>
<rect x="253.4" y="606.4" width="5" height="1.8" fill="#f8d0d0"/>
<path d="M254.8 596.6 v6 M268.6 596.6 v6" stroke="#8a8a8a" stroke-width="1.3"/>
<text x="263.4" y="622.6" font-size="12.6" font-weight="bold" fill="#111" text-anchor="middle" font-family="Liberation Sans, Arial, sans-serif">1</text>
</g>
<g>
<circle cx="299.4" cy="613" r="15.2" fill="#555" opacity="0.35"/><circle cx="299.4" cy="612.6" r="14.6" fill="#eef2f8"/><circle cx="299.4" cy="612.6" r="13.2" fill="url(#bluebtn)"/>
<circle cx="299.4" cy="612.6" r="13.2" fill="none" stroke="#0a2a6a" stroke-width="0.8"/>
<path d="M295.6 605.6 L306 603.6 L306 617.4 A3 2.4 0 1 1 303.8 615 L303.8 607.6 L297.8 608.8 L297.8 619.4 A3 2.4 0 1 1 295.6 617 Z" fill="#15233c"/>
<path d="M297.8 608.8 L303.8 607.6 L303.8 613 L297.8 614.6 Z" fill="#2aa0e8" opacity="0.6"/>
</g>
<g>
<path d="M333.8 599.4 C342.6 599.4 349.6 605 349.6 612 C349.6 619 342.6 624.6 333.8 624.6 C331.8 624.6 330 624.4 328.2 623.8 C326.6 625.8 324.4 627 322 627.2 C323.6 625.8 324.4 624 324.2 622 C320.4 619.8 318 616.2 318 612 C318 605 325 599.4 333.8 599.4 Z" fill="url(#chat)" stroke="#2a5cb8" stroke-width="0.9"/>
<ellipse cx="333.8" cy="605.6" rx="12" ry="4.6" fill="#fff" opacity="0.35"/>
<rect x="327.4" y="608.2" width="8.4" height="7.4" rx="1" fill="#fff"/><path d="M336.6 611.8 L340.4 608.8 L340.4 615 Z" fill="#fff"/>
</g>
<g>
<rect x="353" y="597.4" width="24.2" height="30.6" fill="#d8d8d8" stroke="#9a9a9a" stroke-width="0.6"/>
<rect x="353.6" y="597.6" width="23" height="2.4" fill="#8a8a8a"/>
<rect x="355" y="600" width="20.4" height="19.6" fill="#d40c14"/>
<path d="M357.6 600 v19 M360.6 600 v19 M363.8 600 v19 M367 600 v19 M370.2 600 v19 M373 600 v19" stroke="#8c0408" stroke-width="0.9" opacity="0.8"/>
<rect x="355" y="619.6" width="20.4" height="6.6" fill="#eee"/>
<path d="M357 619.6 l1 4 M361 619.6 l0.6 4.6 M365 619.6 l-0.4 4 M369 619.6 l0.6 4.4" stroke="#555" stroke-width="1"/>
<g transform="rotate(17 377 616)"><rect x="372.6" y="604.6" width="9" height="22.4" fill="#f4f4f4"/>
<rect x="373.4" y="605.6" width="7.4" height="6.2" fill="#4a3a34"/><rect x="373.4" y="612.8" width="7.4" height="6.2" fill="#5a4238"/><rect x="373.4" y="620" width="7.4" height="6.2" fill="#3a2c28"/>
<circle cx="377" cy="608.6" r="2" fill="#d8a890"/><circle cx="377" cy="615.8" r="2" fill="#d8a890"/><circle cx="377" cy="623" r="2" fill="#c89880"/></g>
</g>
<g>
<g transform="rotate(-8 404 610.6)"><rect x="390.8" y="599" width="27.4" height="23.4" fill="#f8f8f8" stroke="#bbb" stroke-width="0.4"/>
<rect x="392.4" y="600.6" width="24.2" height="20.2" fill="url(#sunset)"/>
<path d="M397 620.6 L405.6 606 L408 606.8 L401 620.6 Z M405.6 606 L398 603.6 M405.6 606 L412 602 M405.6 606 L414 607 M405.6 606 L402 601.6 M407 607 L414.6 613" fill="#2a1608" stroke="#2a1608" stroke-width="1.3"/></g>
<rect x="397.6" y="613.8" width="23" height="13.4" rx="1" fill="#8c9098"/>
<rect x="397.6" y="613.8" width="23" height="3.4" fill="#a4a8b0"/>
<circle cx="412.8" cy="621" r="4.8" fill="#d8d8dc"/><circle cx="412.8" cy="621" r="3.4" fill="#6a6e78"/><circle cx="412.8" cy="621" r="1.6" fill="#30323a"/>
</g>
<g><polygon points="439.4 597.4 444.1 607.6 455.8 605.8 447.4 614.4 452.6 624.6 441.6 620.0 432.4 628.4 434.3 616.6 423.6 610.8 436.1 608.8" fill="#38362f" stroke="#dcc684" stroke-width="1.4" stroke-linejoin="miter"/><ellipse cx="440.6" cy="611.6" rx="5.2" ry="4.8" fill="#ece6c8"/><rect x="437.2" y="609.8" width="5.8" height="3.6" fill="#2a2a28"/><path d="M443 611.6 l2.200 -1.600 v3.200 Z" fill="#2a2a28"/></g>
<g>
<path d="M473.4 613.6 L488.4 596.4 L490.6 598.2 L476 615.6 Z" fill="#c89a6a"/>
<path d="M473.4 613.6 L488.4 596.4 L489 597 L474.2 614.2 Z" fill="#6a4a38"/>
<path d="M487 595.4 L491.6 594 L492.2 598.6 L489.4 599.8 Z" fill="#8a8a88"/>
<path d="M472.6 607.6 C475 606.4 477.4 608.4 476.6 611 C478.4 610.6 480.6 612 480 614.4 C479.4 616.4 478 616.6 477.4 617.6 C478.6 622 475.6 626.4 470.6 627.2 C465 628 460.6 624.6 460.4 620 C460.2 615.4 464 612.2 468.6 612.4 C469.6 612.4 470.4 611.6 470.4 610.4 C470.4 609 471.4 608 472.6 607.6 Z" fill="url(#gtr)"/>
<path d="M466.6 619 L474.4 611.6" stroke="#f8e8c0" stroke-width="1.6"/><rect x="465" y="620" width="4" height="2" fill="#ddd" transform="rotate(-45 467 621)"/>
<path d="M477.4 611.4 C479.4 611.6 480.6 613.4 479.4 615.4 L476.8 614 Z" fill="#3a1a10"/>
</g>
<g>
<path d="M507.4 621 h6.4 l1 4.6 h-8.4 Z" fill="#f0a868"/><rect x="504.6" y="625" width="12" height="1.8" rx="0.9" fill="#f0b070"/>
<circle cx="510.6" cy="609" r="12.2" fill="url(#globe)"/>
<path d="M503 603 C505 600.6 508 600 509.6 601.6 C511 603.4 509 605.4 507.6 607.4 C506.4 609.4 504 609 502.4 607 Z M511.6 607.4 C514.6 606.4 517.6 608 517.4 611 C517.2 614 514.4 616.6 512.6 615 C511 613.6 510.4 609.6 511.6 607.4 Z M513 599.6 C515.6 599.6 518 601.6 518.6 603.6 C516.6 604 514 603 513 599.6 Z" fill="#c8ecff" opacity="0.75"/>
<rect x="518.2" y="606" width="8" height="6.6" rx="0.8" fill="#e8a05a"/><path d="M519.8 606 v-2 a2.4 2.4 0 0 1 4.8 0 v2" fill="none" stroke="#d8d0c0" stroke-width="1.2"/>
<rect x="518.2" y="606" width="8" height="2" fill="#f4c080"/>
</g>
<g><rect x="530.6" y="599.6" width="30.6" height="27" rx="1.6" fill="#d4d4d4" stroke="#9c9c9c" stroke-width="0.7"/><rect x="533" y="602" width="25.8" height="22" fill="#4c4c4e"/><path d="M533 602 h25.8 v9 C550 607 541 607 533 611 Z" fill="#6a6a6c"/><polygon points="555.2 614.0 552.5 616.1 553.8 619.3 550.4 619.8 549.9 623.2 546.7 621.9 544.6 624.6 542.5 621.9 539.3 623.2 538.8 619.8 535.4 619.3 536.7 616.1 534.0 614.0 536.7 611.9 535.4 608.7 538.8 608.2 539.3 604.8 542.5 606.1 544.6 603.4 546.7 606.1 549.9 604.8 550.4 608.2 553.8 608.7 552.5 611.9" fill="#d0d0d2"/><circle cx="544.6" cy="614" r="6" fill="#77777a"/><circle cx="544.6" cy="614" r="3" fill="#c4c4c6"/><circle cx="544.6" cy="614" r="1.2" fill="#555"/><path d="M552.6 618 l4 -1.4 l1.4 3 l-2.6 1.4 l1.2 2.6 l-3.6 0.4 Z" fill="#e0e0e0"/><path d="M536 620 l2.6 -2 l2.4 2.6 l-1.2 3.4 l-4 0 Z" fill="#e0e0e0"/></g>
<g>
<rect x="573" y="597" width="3.2" height="5.4" fill="#20c0e8"/><rect x="576.2" y="597" width="3.2" height="5.4" fill="#e020a0"/><rect x="579.4" y="597" width="3.2" height="5.4" fill="#e8d818"/><rect x="582.6" y="597" width="3" height="5.4" fill="#f4e020"/>
<path d="M569.6 602 h19.6 l2.6 3 h-25 Z" fill="#b8b8ba"/>
<rect x="566.4" y="605" width="25.6" height="17" fill="#8e8e90"/><rect x="566.4" y="605" width="25.6" height="3.4" fill="#c4c4c6"/>
<rect x="572.6" y="608.6" width="14" height="9.6" fill="#d8dce4"/><circle cx="579.6" cy="613.4" r="4" fill="#1c5cb8"/>
<text x="579.6" y="615.4" font-size="5" font-style="italic" font-weight="bold" fill="#fff" text-anchor="middle" font-family="Liberation Sans, Arial, sans-serif">hp</text>
<rect x="568" y="620.6" width="22.6" height="4.6" fill="#6c6c6e"/><rect x="570" y="622" width="18" height="1.4" fill="#b4b4b4"/>
<path d="M596.4 604 L592.6 616 L590.2 615.2 L594 603.4 Z" fill="#5aa088"/><path d="M592 616 L589.2 625.6 L588.4 625.2 L590.6 615.6 Z" fill="#d0d0d0"/>
</g>
<g font-family="Liberation Sans, Arial, sans-serif" font-weight="bold" text-anchor="middle" stroke-linejoin="round">
<text transform="translate(616.8,625.6) scale(0.8,1)" font-size="35.5" fill="url(#wblue)" stroke="#2aa6e0" stroke-width="1.2">W</text>
</g>
<g font-family="Liberation Sans, Arial, sans-serif" font-weight="bold" text-anchor="middle" stroke-linejoin="round">
<text transform="translate(655,626.2) scale(0.86,1)" font-size="38" fill="url(#pred)" stroke="#f2602e" stroke-width="1.2">P</text>
</g>
<g font-family="Liberation Sans, Arial, sans-serif" font-weight="bold" text-anchor="middle" stroke-linejoin="round">
<text transform="translate(688,626) scale(0.94,1)" font-size="37.5" fill="url(#xgreen)" stroke="#42ae42" stroke-width="1.2">X</text>
</g>
<g>
<circle cx="723.4" cy="612.6" r="15.4" fill="url(#silver)"/><circle cx="723.4" cy="612.6" r="14.4" fill="none" stroke="#fafafa" stroke-width="1"/><circle cx="723.4" cy="612.6" r="12.2" fill="#8a9294"/><circle cx="723.4" cy="612.6" r="11.4" fill="url(#tm)"/>
<path d="M717 612.8 A6.6 6.6 0 1 0 719.4 607.8" fill="none" stroke="#fff" stroke-width="1.7"/>
<path d="M714 610.8 L720.4 610.6 L717.4 615.2 Z" fill="#fff"/>
<path d="M723.6 608.6 V613.2 L726.6 614.8" fill="none" stroke="#fff" stroke-width="1.1"/>
</g>
<g>
<ellipse cx="751.6" cy="617" rx="6.4" ry="8.6" fill="url(#msng)"/><circle cx="752.6" cy="604" r="4.7" fill="#a8dc48"/>
<ellipse cx="765" cy="618" rx="8.2" ry="10" fill="url(#msnb)"/><circle cx="764" cy="602.8" r="5.6" fill="#2cb4e4"/>
<ellipse cx="763" cy="600.8" rx="3" ry="1.8" fill="#fff" opacity="0.3"/>
</g>
<g>
<ellipse cx="794" cy="622.4" rx="13" ry="4.6" fill="#e4e4e4" stroke="#a8a8a8" stroke-width="0.6"/>
<path d="M781.4 621.6 A13 4.4 0 0 1 806.6 621.6" fill="none" stroke="#e8a040" stroke-width="1.6" opacity="0.8"/>
<circle cx="793.8" cy="608.4" r="11.2" fill="url(#ffg)"/>
<path d="M786 604 C788 601 791 600.6 792 602.6 C792.6 604.6 790 606 788.6 607.6 Z M797 601 C800 601 802.6 603.6 803 606 C800.6 606.6 798 605 797 601 Z" fill="#9cdcff" opacity="0.7"/>
<path d="M789.6 605.4 h8.6 v11 h5 l-9.4 10 l-9.2 -10 h5 Z" fill="#a4d058" stroke="#6a9c30" stroke-width="0.5"/>
</g>
<g>
<ellipse cx="837" cy="617" rx="8.2" ry="10.2" fill="#b48c3c"/>
<path d="M831 611 l12 10 M830 616 l11 9 M834 608 l10 8 M843 610 l-12 11 M845 615 l-11 10 M840 607.6 l-10 9" stroke="#6a4a18" stroke-width="0.9" opacity="0.8"/>
<path d="M837 607.4 L832.6 600 L836 602.6 L836.6 596.6 L838.6 602 L842.6 597.6 L840.6 603.4 L845.4 601.6 L840 607.6 Z" fill="#2a9a48"/>
<path d="M816.6 608.6 h14.4 a7.2 7.6 0 0 1 -14.4 0 Z" fill="url(#drink)"/>
<path d="M816.6 608.6 h14.4" stroke="#f0f0f0" stroke-width="0.8"/>
<rect x="823.2" y="616" width="1.4" height="8.6" fill="#c8c8c8"/><ellipse cx="823.8" cy="625.4" rx="4.6" ry="1.5" fill="#d8d8d8" stroke="#999" stroke-width="0.4"/>
<path d="M827 608 l1.4 -6.4 l3.4 1.2 l-2 2 Z" fill="#2a9a48"/><circle cx="818" cy="599" r="2" fill="#d03a7a"/><path d="M819 600 l3 8" stroke="#6a4a2a" stroke-width="0.8"/>
<circle cx="822.6" cy="603.6" r="1.6" fill="#e8c020"/>
</g>
<g>
<g transform="rotate(-14 865.6 616.6)">
<rect x="854.6" y="606" width="22.4" height="22" rx="3.2" fill="#9a9a9a"/><rect x="857.6" y="609" width="16.4" height="16" rx="1.4" fill="#e4e4e4"/>
<path d="M863.6 606 h4.6 v12 h3.4 l-5.8 6.4 l-5.6 -6.4 h3.4 Z" fill="#6a6a6a"/>
<rect x="864.4" y="602" width="3" height="6" fill="#c4c4c4"/>
</g>
<g transform="rotate(-20 861.6 601.4)"><rect x="851.6" y="597.6" width="20.4" height="7.6" rx="3.8" fill="#e01818"/><rect x="859.4" y="597.4" width="4.6" height="8" fill="#f4f4f4"/><rect x="852.6" y="598.2" width="18" height="2.4" rx="1.2" fill="#ff7a7a" opacity="0.6"/></g>
</g>
<g>
<path d="M884.6 595.6 L899.6 612.6 M900.6 595.6 L888.6 612" stroke="#b4b4b4" stroke-width="2" opacity="0.85"/>
<path d="M893.6 609 h22 l-1.6 16.4 h-22.4 Z" fill="url(#win)"/>
<path d="M890.4 625.4 h24.6 l1.6 1.8 h-27.4 Z" fill="#c4c8cc"/>
<path d="M899.8 613.4 c1.6 -1 3 -1 4.4 0 l-0.8 3.6 c-1.4 -1 -2.8 -1 -4.4 0 Z" fill="#e8502a"/>
<path d="M905 613.6 c1.4 1 2.8 1 4.4 0 l-0.8 3.600 c-1.6 1 -3 1 -4.400 0 Z" fill="#6cc03c"/>
<path d="M898.8 617.800 c1.600 -1 3 -1 4.400 0 l-0.800 3.600 c-1.400 -1 -2.800 -1 -4.400 0 Z" fill="#2a8ce0"/>
<path d="M904 618 c1.400 1 2.800 1 4.400 0 l-0.800 3.600 c-1.600 1 -3 1 -4.400 0 Z" fill="#f4c020"/>
</g>
<g>
<g transform="rotate(8 935 603)"><rect x="922.6" y="597.6" width="24" height="14" fill="#e8dcc0"/><rect x="924" y="599" width="21.2" height="11" fill="#b89a68"/></g>
<g transform="rotate(-24 934 613.4)"><rect x="922.4" y="602.6" width="23.6" height="21.6" fill="#fafafa" stroke="#c4c4c4" stroke-width="0.4"/>
<rect x="924" y="604.2" width="20.4" height="18.4" fill="#5a94dc"/><rect x="924" y="613.6" width="20.4" height="4" fill="#e4eefa"/><rect x="924" y="617" width="20.4" height="5.600" fill="#8ab4e8"/>
<path d="M930.6 622.600 c0 -5 1.600 -7 4 -7.400 c2.400 0.400 4 2.400 4 7.400 Z" fill="#2a2a30"/><circle cx="934.6" cy="612.400" r="2.600" fill="#3a2a24"/><circle cx="934.6" cy="613" r="1.700" fill="#c89478"/></g>
<circle cx="945.4" cy="612.400" r="5.200" fill="#222"/><circle cx="945.4" cy="612.400" r="3.200" fill="#d8d8d8"/><circle cx="944.6" cy="611.600" r="1.400" fill="#fff"/>
<path d="M941 616.600 l-3.600 4.400" stroke="#222" stroke-width="2.600" stroke-linecap="round"/>
<ellipse cx="943.6" cy="621.6" rx="6" ry="2.400" fill="#999" opacity="0.5"/>
</g>
</svg>
<div class="t b" style="left:6.5px;top:-9.5px;font-size:12px;">Vehicle Specifications:</div>
<div class="t b" style="left:211px;top:-9.5px;font-size:12px;">Suspension Geometry:</div>
<div class="t b" style="left:472px;top:-9.5px;font-size:12px;">Geometry Summary:</div>
<div class="box" style="left:126.4px;top:5px;width:41.6px;height:97px;background:#ccf8fb;"></div>
<div class="box" style="left:2.8px;top:4.2px;width:185.6px;height:98.8px;border:1.3px solid #000;"></div>
<div class="t r" style="right:839.5px;top:5.5px;">Wheelbase</div>
<div class="t r" style="right:798.7px;top:5.5px;">112.0</div>
<div class="t " style="left:170.5px;top:5.5px;">in</div>
<div class="t r" style="right:839.5px;top:20.5px;">Tire Diameter</div>
<div class="t r" style="right:798.7px;top:20.5px;">42.00</div>
<div class="t " style="left:170.5px;top:20.5px;">in</div>
<div class="t r" style="right:839.5px;top:34.5px;">Tire Rolling Radius</div>
<div class="t r" style="right:798.7px;top:34.5px;">19.75</div>
<div class="t " style="left:170.5px;top:34.5px;">in</div>
<div class="t r" style="right:839.5px;top:47.5px;">Vehicle CG Height</div>
<div class="t r" style="right:798.7px;top:47.5px;">43.00</div>
<div class="t " style="left:170.5px;top:47.5px;">in</div>
<div class="t r" style="right:839.5px;top:62.5px;">Vehicle Mass</div>
<div class="t r" style="right:798.7px;top:62.5px;">6,000</div>
<div class="t " style="left:170.5px;top:62.5px;">lb</div>
<div class="t r" style="right:839.5px;top:76.5px;">Front Unsprung Mass</div>
<div class="t r" style="right:798.7px;top:76.5px;">1,500</div>
<div class="t " style="left:170.5px;top:76.5px;">lb</div>
<div class="t r" style="right:839.5px;top:90.5px;">Rear Unsprung Mass</div>
<div class="t r" style="right:798.7px;top:90.5px;">1,500</div>
<div class="t " style="left:170.5px;top:90.5px;">lb</div>
<div class="tri" style="left:163px;top:46.6px;"></div>
<div class="box" style="left:307.6px;top:18.4px;width:122.9px;height:28px;background:#ccf8fb;"></div>
<div class="box" style="left:307.6px;top:60.2px;width:122.9px;height:28px;background:#ccf8fb;"></div>
<div class="box" style="left:208.5px;top:5px;width:99.4px;height:13.6px;background:#0a14c8;"></div>
<div class="box" style="left:208.5px;top:46.3px;width:99.4px;height:14.1px;background:#dc0a0a;"></div>
<div class="box" style="left:207.6px;top:4.2px;width:241.4px;height:84.4px;border:1.3px solid #000;"></div>
<div class="t r b" style="right:658.6px;top:5.5px;color:#fff;font-size:12px;"><u>Upper Links</u></div>
<div class="t r b" style="right:658.6px;top:47.5px;color:#fff;font-size:12px;"><u>Lower Links</u></div>
<div class="t c" style="left:277.4px;width:100px;top:5.5px;">x</div>
<div class="t c" style="left:318.6px;width:100px;top:5.5px;">y</div>
<div class="t c" style="left:359.3px;width:100px;top:5.5px;">z</div>
<div class="t c" style="left:277.4px;width:100px;top:47.5px;">x</div>
<div class="t c" style="left:318.6px;width:100px;top:47.5px;">y</div>
<div class="t c" style="left:359.3px;width:100px;top:47.5px;">z</div>
<div class="t r" style="right:658.8px;top:20.5px;">Frame End</div>
<div class="t c" style="left:277.4px;width:100px;top:20.5px;">34.00</div>
<div class="t c" style="left:318.4px;width:100px;top:20.5px;">12.00</div>
<div class="t c" style="left:359.4px;width:100px;top:20.5px;">33.00</div>
<div class="t " style="left:433.4px;top:20.5px;">in</div>
<div class="t r" style="right:658.8px;top:34.5px;">Axle End</div>
<div class="t c" style="left:277.4px;width:100px;top:34.5px;">0.00</div>
<div class="t c" style="left:318.4px;width:100px;top:34.5px;">2.00</div>
<div class="t c" style="left:359.4px;width:100px;top:34.5px;">30.50</div>
<div class="t " style="left:433.4px;top:34.5px;">in</div>
<div class="t r" style="right:658.8px;top:62.5px;">Frame End</div>
<div class="t c" style="left:277.4px;width:100px;top:62.5px;">42.00</div>
<div class="t c" style="left:318.4px;width:100px;top:62.5px;">10.00</div>
<div class="t c" style="left:359.4px;width:100px;top:62.5px;">26.00</div>
<div class="t " style="left:433.4px;top:62.5px;">in</div>
<div class="t r" style="right:658.8px;top:76.5px;">Axle End</div>
<div class="t c" style="left:277.4px;width:100px;top:76.5px;">3.00</div>
<div class="t c" style="left:318.4px;width:100px;top:76.5px;">24.00</div>
<div class="t c" style="left:359.4px;width:100px;top:76.5px;">20.00</div>
<div class="t " style="left:433.4px;top:76.5px;">in</div>
<div class="tri" style="left:343.2px;top:19px;"></div>
<div class="tri" style="left:384.4px;top:19px;"></div>
<div class="tri" style="left:425.4px;top:19px;"></div>
<div class="tri" style="left:343.2px;top:33px;"></div>
<div class="tri" style="left:384.4px;top:33px;"></div>
<div class="tri" style="left:425.4px;top:33px;"></div>
<div class="tri" style="left:343.2px;top:61px;"></div>
<div class="tri" style="left:384.4px;top:61px;"></div>
<div class="tri" style="left:425.4px;top:61px;"></div>
<div class="tri" style="left:343.2px;top:75px;"></div>
<div class="tri" style="left:384.4px;top:75px;"></div>
<div class="tri" style="left:425.4px;top:75px;"></div>
<div class="box" style="left:389.4px;top:74.3px;width:41.2px;height:14.2px;border:2px solid #3b6cc4;"></div>
<div class="box" style="left:427.4px;top:85.4px;width:5.8px;height:5.6px;background:#6a96d8;border:1px solid #fff;border-right:none;border-bottom:none;"></div>
<div class="box" style="left:590px;top:5px;width:35px;height:13.2px;background:linear-gradient(#2bb237,#1da129);"></div>
<div class="box" style="left:590px;top:18.2px;width:35px;height:14px;background:#ffff9c;"></div>
<div class="box" style="left:590px;top:32.2px;width:35px;height:14.4px;background:#ff9a0a;"></div>
<div class="box" style="left:855px;top:5px;width:108px;height:13.2px;background:linear-gradient(#2bb237,#1da129);"></div>
<div class="box" style="left:855px;top:18.2px;width:108px;height:14px;background:#ffff9c;"></div>
<div class="box" style="left:855px;top:32.2px;width:108px;height:14.2px;background:#ff9a0a;"></div>
<div class="box" style="left:855px;top:46.4px;width:108px;height:27.4px;background:#fff20a;"></div>
<div class="box" style="left:855px;top:73.8px;width:108px;height:14px;background:#ccf8fb;"></div>
<div class="box" style="left:469px;top:4.2px;width:520px;height:84.4px;border:1.3px solid #000;"></div>
<div class="t r" style="right:375.79999999999995px;top:5.5px;">Static Anti-Squat</div>
<div class="t r" style="right:341.6px;top:5.5px;">66</div>
<div class="t " style="left:627.5px;top:5.5px;">%</div>
<div class="t r" style="right:375.79999999999995px;top:20.5px;">Roll Center Height</div>
<div class="t r" style="right:341.6px;top:20.5px;">30</div>
<div class="t " style="left:627.5px;top:20.5px;">in</div>
<div class="t r" style="right:375.79999999999995px;top:34.5px;">Roll Axis Angle</div>
<div class="t r" style="right:341.6px;top:34.5px;">0</div>
<div class="t " style="left:627.5px;top:34.5px;">degrees (Roll Oversteer)</div>
<div class="t r" style="right:375.79999999999995px;top:47.5px;">Instant Center X-Axis</div>
<div class="t r" style="right:341.6px;top:47.5px;">136</div>
<div class="t " style="left:627.5px;top:47.5px;">in</div>
<div class="t r" style="right:375.79999999999995px;top:62.5px;">Instant Center Z-Axis</div>
<div class="t r" style="right:341.6px;top:62.5px;">41</div>
<div class="t " style="left:627.5px;top:62.5px;">in</div>
<div class="t r" style="right:110.5px;top:5.5px;">Travel Anti-Squat:</div>
<div class="t r" style="right:3px;top:5.5px;">66%</div>
<div class="t r" style="right:110.5px;top:20.5px;">Travel Roll Center:</div>
<div class="t r" style="right:3px;top:20.5px;">30.03</div>
<div class="t r" style="right:110.5px;top:34.5px;">Travel Roll Axis:</div>
<div class="t r" style="right:3px;top:34.5px;">0.21°</div>
<div class="t r" style="right:110.5px;top:47.5px;">Pinion Change:</div>
<div class="t r" style="right:3px;top:47.5px;">0.00°</div>
<div class="t r" style="right:110.5px;top:62.5px;">Travel Amount:</div>
<div class="t r" style="right:3px;top:62.5px;">0.00</div>
<div class="t r b" style="right:127px;top:76.5px;">Travel Increment:</div>
<div class="t r" style="right:3px;top:76.5px;">0.00</div>
<div class="box" style="left:750.4px;top:89.8px;width:97.4px;height:21.4px;background:linear-gradient(#e6e6e8,#dedee0);border-left:1px solid #f0f0f0;border-top:1px solid #f2f2f2;border-right:1.6px solid #8a8a8a;border-bottom:1.6px solid #8a8a8a;"></div>
<div class="t c" style="left:750.4px;width:97.4px;top:94.3px;font-size:10.5px;">Bump</div>
<div class="box" style="left:863.4px;top:89.8px;width:91px;height:21.4px;background:linear-gradient(#e6e6e8,#dedee0);border-left:1px solid #f0f0f0;border-top:1px solid #f2f2f2;border-right:1.6px solid #8a8a8a;border-bottom:1.6px solid #8a8a8a;"></div>
<div class="t c" style="left:863.4px;width:91px;top:94.3px;font-size:10.5px;">Droop</div>
</body></html>
